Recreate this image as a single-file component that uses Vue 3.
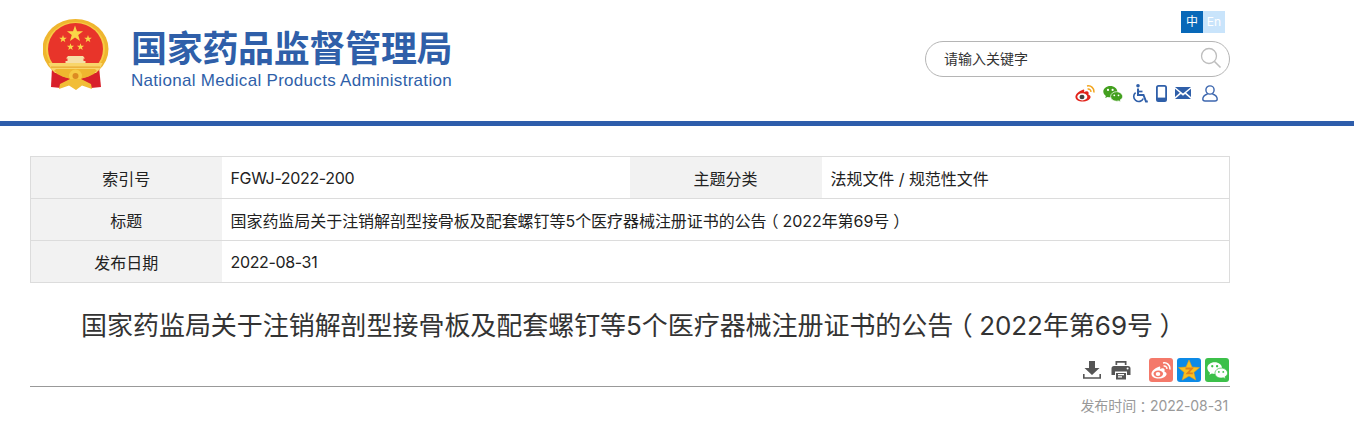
<template>
  <div class="page">
    <header class="top">
      <div class="brand">
        <svg class="emblem" viewBox="0 0 66 72" width="66" height="72">
          <path d="M9 48 L8 68 L18 69 L30 60 Z" fill="#d8202a" />
          <path d="M56 48 L58 68 L48 69 L35 60 Z" fill="#d8202a" />
          <ellipse cx="32.5" cy="30" rx="33" ry="30" fill="#efb62f" />
          <ellipse cx="32.5" cy="30" rx="29.5" ry="27" fill="#f7cb45" />
          <ellipse cx="32.5" cy="30" rx="27.5" ry="26" fill="#e8342a" />
          <polygon :points="star(32, 15, 8.5)" fill="#f9d648" />
          <polygon :points="star(20, 20, 4)" fill="#f9d648" />
          <polygon :points="star(45, 20, 4)" fill="#f9d648" />
          <polygon :points="star(27.5, 28, 3.8)" fill="#f9d648" />
          <polygon :points="star(37.5, 28, 3.8)" fill="#f9d648" />
          <path d="M25 37 H40 L42 39.5 H40.5 V42 H42.5 V45 H22.5 V42 H24.5 V39.5 H23 Z" fill="#f6dfa6" />
          <path d="M5.5 44 H59.5 C58 48 56 51 53 54 H12 C9 51 7 48 5.5 44 Z" fill="#f8d56a" />
          <rect x="8" y="47.5" width="49" height="1.3" fill="#e9aa33" />
          <path d="M11 52 C19 58 26 60 32.5 60 C39 60 46 58 54 52 L52 50 H13 Z" fill="#efb62f" />
          <circle cx="32.5" cy="57" r="6.5" fill="#f7cb45" />
          <circle cx="32.5" cy="57" r="3" fill="#dd8b22" />
          <path d="M17 65 L27 60 H38 L48 65 L49 70 L39 66.5 L33 71 L26 66.5 L16 70 Z" fill="#f1bd36" />
        </svg>
        <div class="names">
          <div class="cn">国家药品监督管理局</div>
          <div class="en">National Medical Products Administration</div>
        </div>
      </div>

      <div class="tools">
        <div class="lang"><span class="zh">中</span><span class="lat">En</span></div>
        <div class="search">
          <span>请输入关键字</span>
          <svg viewBox="0 0 22 22" width="22" height="22" fill="none" stroke="#bdbdbd" stroke-width="1.3">
            <circle cx="9" cy="9" r="7.5" />
            <path d="M14.5 14.5 L20.5 20.5" stroke-width="1.6" />
          </svg>
        </div>
        <div class="quick">
          <svg viewBox="0 0 20 17" width="20" height="17">
            <path d="M8.5 4.5 C3.5 6 0 9.5 0.5 12.5 C1 15.5 5 17 9 16.5 C13.5 16 16 13.5 15.5 11.5 C15.2 10.3 14 10 13.3 9.6 C14 8 13.8 6.8 12.6 6.4 C11.6 6.1 10 6.6 9 7 C9.4 5.4 9.4 4.3 8.5 4.5 Z" fill="#e2231a" />
            <ellipse cx="7.3" cy="11.8" rx="5" ry="3.6" fill="#fff" />
            <ellipse cx="7" cy="12" rx="2.5" ry="2.2" fill="#444" />
            <path d="M12 1 C16 0 19.5 3.5 18.8 7.5" fill="none" stroke="#f2a51e" stroke-width="1.5" />
            <path d="M12.6 4 C14.6 3.6 16.2 5.2 15.9 7" fill="none" stroke="#f2a51e" stroke-width="1.4" />
          </svg>
          <svg viewBox="0 0 20 17" width="20" height="17">
            <path d="M7.3 1 C3.4 1 .3 3.5 .3 6.6 C.3 8.4 1.3 9.9 2.9 11 L2.2 13 L4.6 11.9 C5.5 12.2 6.4 12.3 7.4 12.3 C11.2 12.3 14.3 9.8 14.3 6.6 C14.3 3.5 11.2 1 7.3 1 Z" fill="#43a01f" />
            <path d="M13.5 6.7 C10.2 6.7 7.6 8.9 7.6 11.5 C7.6 14.1 10.2 16.2 13.5 16.2 C14.2 16.2 14.9 16.1 15.5 15.9 L17.7 17 L17.1 15 C18.7 14.1 19.6 12.9 19.6 11.5 C19.6 8.9 16.8 6.7 13.5 6.7 Z" fill="#43a01f" stroke="#fff" stroke-width=".7" />
            <circle cx="5" cy="4.9" r="1.1" fill="#fff" /><circle cx="9.6" cy="4.9" r="1.1" fill="#fff" />
            <circle cx="11.3" cy="10.3" r=".9" fill="#fff" /><circle cx="15.5" cy="10.3" r=".9" fill="#fff" />
          </svg>
          <svg viewBox="0 0 17 19" width="17" height="19" fill="none" stroke="#2f5fa9">
            <circle cx="7" cy="1.8" r="1.8" fill="#2f5fa9" stroke="none" />
            <path d="M7 4.5 V11 H12.5 L15 17.5 H16.8" stroke-width="2" />
            <path d="M7 7.5 H11.5" stroke-width="1.7" />
            <path d="M4.6 8.6 A5 5 0 1 0 12.3 14.5" stroke-width="1.6" />
          </svg>
          <svg viewBox="0 0 11 17" width="11" height="17">
            <rect x=".9" y=".9" width="9.2" height="15.2" rx="1.6" fill="none" stroke="#2f5fa9" stroke-width="1.8" />
            <rect x="1" y="12.6" width="9" height="3.6" fill="#2f5fa9" />
          </svg>
          <svg class="mail" viewBox="0 0 16 12" width="16" height="12">
            <path d="M0 0 H16 L8 6.6 Z M0 1.8 L4.8 5.8 L0 10 Z M16 1.8 L11.2 5.8 L16 10 Z M0 12 L5.9 7 L8 8.7 L10.1 7 L16 12 Z" fill="#2f5fa9" />
          </svg>
          <svg viewBox="0 0 16 17" width="16" height="17" fill="none" stroke="#3c66ae" stroke-width="1.4">
            <circle cx="8" cy="5" r="4.1" />
            <path d="M5.6 9 C2.8 10 .8 12 .8 14 C.8 15.4 1.6 16 3 16 H13 C14.4 16 15.2 15.4 15.2 14 C15.2 12 13.2 10 10.4 9" />
          </svg>
        </div>
      </div>
    </header>
    <div class="rule"></div>

    <main class="content">
      <table class="meta">
        <colgroup>
          <col style="width: 191px" />
          <col style="width: 408px" />
          <col style="width: 192px" />
          <col />
        </colgroup>
        <tbody>
          <tr>
            <th>索引号</th>
            <td class="num">FGWJ-2022-200</td>
            <th>主题分类</th>
            <td>法规文件 / 规范性文件</td>
          </tr>
          <tr>
            <th>标题</th>
            <td colspan="3">国家药监局关于注销解剖型接骨板及配套螺钉等5个医疗器械注册证书的公告<span class="fw">（</span>2022年第69号<span class="fw">）</span></td>
          </tr>
          <tr>
            <th>发布日期</th>
            <td colspan="3" class="num">2022-08-31</td>
          </tr>
        </tbody>
      </table>

      <h1>国家药监局关于注销解剖型接骨板及配套螺钉等5个医疗器械注册证书的公告<span class="fw">（</span>2022年第69号<span class="fw">）</span></h1>

      <div class="share">
        <svg viewBox="0 0 18 18" width="18" height="18">
          <path d="M6 0 H12 V7 H16.5 L9 14 L1.5 7 H6 Z" fill="#555" />
          <path d="M.8 13 V17 H17.2 V13" fill="none" stroke="#555" stroke-width="1.6" />
        </svg>
        <svg class="printer" viewBox="0 0 20 20" width="20" height="20">
          <path d="M4.5 1 H15.5 V5 H13.8 V2.7 H6.2 V5 H4.5 Z" fill="#555" />
          <path d="M3 6 H17 C18.6 6 19.5 7 19.5 8.5 V15 H16 V11.5 H4 V15 H.5 V8.5 C.5 7 1.4 6 3 6 Z" fill="#555" />
          <path d="M5 13 H15 V19.5 H5 Z" fill="#555" />
          <path d="M7 14.6 H13 M7 16.8 H11" stroke="#fff" stroke-width="1.2" />
          <circle cx="16.6" cy="8.6" r="1" fill="#fff" />
        </svg>
        <span class="badge weibo">
          <svg viewBox="0 0 20 17" width="20" height="17">
            <path d="M8.5 4.5 C3.5 6 0 9.5 0.5 12.5 C1 15.5 5 17 9 16.5 C13.5 16 16 13.5 15.5 11.5 C15.2 10.3 14 10 13.3 9.6 C14 8 13.8 6.8 12.6 6.4 C11.6 6.1 10 6.6 9 7 C9.4 5.4 9.4 4.3 8.5 4.5 Z" fill="#fff" />
            <ellipse cx="7.3" cy="11.8" rx="4.8" ry="3.4" fill="#f4796a" />
            <ellipse cx="7" cy="12" rx="2.3" ry="2" fill="#fff" />
            <path d="M12 1 C16 0 19.5 3.5 18.8 7.5" fill="none" stroke="#fff" stroke-width="1.5" />
            <path d="M12.6 4 C14.6 3.6 16.2 5.2 15.9 7" fill="none" stroke="#fff" stroke-width="1.4" />
          </svg>
        </span>
        <span class="badge qzone">
          <svg viewBox="0 0 22 22" width="22" height="22">
            <polygon points="11,1 14,8 21.5,8.6 15.8,13.4 17.8,21 11,17 4.2,21 6.2,13.4 .5,8.6 8,8" fill="#fbc01e" stroke="#e8a019" stroke-width=".6" />
            <path d="M7.5 9.5 H14 L9.5 14.3 H14.8" fill="none" stroke="#e2811a" stroke-width="1.8" />
          </svg>
        </span>
        <span class="badge wechat">
          <svg viewBox="0 0 20 17" width="21" height="18">
            <path d="M7.3 1 C3.4 1 .3 3.5 .3 6.6 C.3 8.4 1.3 9.9 2.9 11 L2.2 13 L4.6 11.9 C5.5 12.2 6.4 12.3 7.4 12.3 C11.2 12.3 14.3 9.8 14.3 6.6 C14.3 3.5 11.2 1 7.3 1 Z" fill="#fff" />
            <path d="M13.5 6.7 C10.2 6.7 7.6 8.9 7.6 11.5 C7.6 14.1 10.2 16.2 13.5 16.2 C14.2 16.2 14.9 16.1 15.5 15.9 L17.7 17 L17.1 15 C18.7 14.1 19.6 12.9 19.6 11.5 C19.6 8.9 16.8 6.7 13.5 6.7 Z" fill="#fff" stroke="#3cc04a" stroke-width=".7" />
            <circle cx="5" cy="4.9" r="1.1" fill="#3cc04a" /><circle cx="9.6" cy="4.9" r="1.1" fill="#3cc04a" />
            <circle cx="11.3" cy="10.3" r=".9" fill="#3cc04a" /><circle cx="15.5" cy="10.3" r=".9" fill="#3cc04a" />
          </svg>
        </span>
      </div>
      <div class="published">发布时间<span class="fw">：</span>2022-08-31</div>
    </main>
  </div>
</template>

<script setup>
// five-point star polygon for the emblem stars
const star = (cx, cy, r) => {
  const pts = []
  for (let i = 0; i < 10; i++) {
    const rad = i % 2 ? r * 0.4 : r
    const a = (Math.PI / 5) * i - Math.PI / 2
    pts.push((cx + rad * Math.cos(a)).toFixed(2) + ',' + (cy + rad * Math.sin(a)).toFixed(2))
  }
  return pts.join(' ')
}
</script>

<style>
html, body { margin: 0; background: #fff; overflow: hidden; }
</style>

<style scoped>
.page {
  width: 1354px;
  font-family: Inter, "Noto Sans CJK SC", sans-serif;
  color: #333;
}
.top {
  width: 1200px;
  height: 121px;
  margin-left: 30px;
  display: flex;
  justify-content: space-between;
}
.brand { display: flex; padding: 19px 0 0 13px; }
.emblem { display: block; }
.names { margin-left: 22px; padding-top: 6px; }
.cn {
  font-family: "Noto Sans CJK SC", sans-serif;
  font-size: 36px;
  line-height: 42px;
  font-weight: 700;
  letter-spacing: -0.3px;
  color: #2f5fa9;
  white-space: nowrap;
}
.en {
  font-family: "Liberation Sans", sans-serif;
  font-size: 17px;
  letter-spacing: 0.3px;
  line-height: 20px;
  margin-top: 4px;
  color: #2f5fa9;
  white-space: nowrap;
}
.tools { width: 305px; display: flex; flex-direction: column; align-items: flex-end; padding-top: 11px; }
.lang { display: flex; margin-right: 5px; font-size: 12px; line-height: 22px; text-align: center; }
.lang span { width: 22px; height: 22px; }
.zh { background: #0868b8; color: #fff; }
.lat { background: #c9e4fb; color: #fff; }
.search {
  box-sizing: border-box;
  width: 305px;
  height: 36px;
  margin-top: 8px;
  border: 1px solid #b5b5b5;
  border-radius: 18px;
  padding: 0 7px 2px 18px;
  display: flex;
  align-items: center;
  justify-content: space-between;
  font-size: 14px;
  color: #333;
}
.quick { display: flex; align-items: center; gap: 8px; margin-top: 6px; margin-right: 12px; height: 20px; }
.mail { margin-right: 3px; }
.rule { height: 5px; background: #2e5dab; }
.content { width: 1200px; margin: 30px 0 0 30px; }
.meta {
  width: 1200px;
  border-collapse: collapse;
  table-layout: fixed;
  font-size: 16px;
  letter-spacing: -0.05px;
  color: #222;
  border: 1px solid #dcdcdc;
}
.meta th, .meta td { height: 41px; padding: 0; border-top: 1px solid #dcdcdc; border-bottom: 1px solid #dcdcdc; }
.meta th { background: #f2f2f2; font-weight: 400; }
.meta td { padding-left: 9px; white-space: nowrap; }
.meta td.num { letter-spacing: -0.35px; }
/* half-width form of the punctuation, centred in its em like the reference font */
.fw { font-feature-settings: "halt"; margin: 0 0.25em; }
h1 {
  margin: 24px 0 0;
  font-size: 26px;
  line-height: 37px;
  font-weight: 400;
  letter-spacing: -0.05px;
  text-align: center;
  color: #333;
  white-space: nowrap;
}
.share {
  height: 24px;
  margin-top: 14px;
  padding-bottom: 4px;
  border-bottom: 1px solid #999;
  display: flex;
  justify-content: flex-end;
  align-items: center;
}
.printer { margin-left: 10px; margin-right: 18px; }
.badge {
  width: 24px;
  height: 24px;
  margin-left: 4px;
  border-radius: 3px;
  display: flex;
  align-items: center;
  justify-content: center;
}
.badge.weibo { margin-left: 0; }
.weibo { background: #f4796a; }
.qzone { background: #0d8ae6; }
.wechat { background: #3cc04a; margin-right: 1px; }
.published { margin-top: 9px; padding-right: 2px; text-align: right; font-size: 14px; letter-spacing: -0.1px; line-height: 20px; color: #999; }
</style>
